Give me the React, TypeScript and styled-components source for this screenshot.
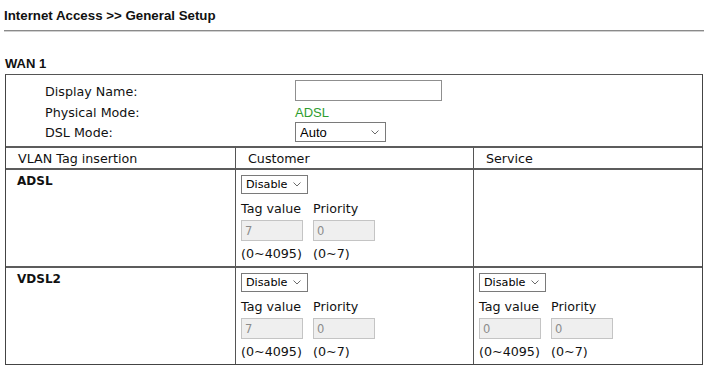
import React from "react";
import styled, { createGlobalStyle } from "styled-components";

const GlobalStyle = createGlobalStyle`
  html, body { margin: 0; padding: 0; background: #fff; }
  body { font-family: "DejaVu Sans", Verdana, sans-serif; color: #111; }
  * { box-sizing: border-box; }
`;

const Page = styled.div`
  width: 710px;
  height: 370px;
  padding: 8px 6px 0 4px;
  overflow: hidden;
`;

const Title = styled.h1`
  margin: 0;
  font: bold 13.3px/16px "Liberation Sans", Arial, sans-serif;
  color: #111;
`;

const Rule = styled.hr`
  margin: 6px 0 0;
  width: 700px;
  height: 0;
  border: 0;
  border-top: 1px solid #8a8a8a;
  border-bottom: 1px solid #d0d0d0;
`;

const Section = styled.h2`
  margin: 24px 0 0 1px;
  font: bold 13px/16px "Liberation Sans", Arial, sans-serif;
  color: #111;
`;

const Box = styled.div`
  margin: 2px 0 0 1px;
  width: 698px;
  border: 1px solid #444;
  border-top-color: #555;
  font-size: 12.7px;
`;

const General = styled.div`
  display: grid;
  grid-template-columns: 250px 1fr;
  grid-template-rows: 21px 21px 20px;
  align-items: center;
  padding: 5px 0 4px 39px;
`;

const Label = styled.div`
  line-height: 20px;
  padding-top: 2px;
`;

const Green = styled.div`
  font: 13px/20px "Liberation Sans", Arial, sans-serif;
  color: #2e9d2e;
  padding-top: 2px;
`;

const TextInput = styled.input`
  width: 147px;
  height: 21px;
  border: 1px solid #8f8f8f;
  background: #fff;
  padding: 0 3px;
  font: 12px "DejaVu Sans", sans-serif;
  outline: none;
`;

const VlanGrid = styled.div`
  display: grid;
  grid-template-columns: 229px 238px 1fr;
`;

const Cell = styled.div<{ $head?: boolean; $first?: boolean }>`
  border-top: 2px solid #5c5c5c;
  border-left: ${(p) => (p.$first ? "0" : "1px solid #555")};
  height: ${(p) => (p.$head ? "22px" : "98px")};
  padding: ${(p) => (p.$head ? "1px 0 0 12px" : "5px 0 0 5px")};
  line-height: 20px;
`;

const RowLabel = styled.div`
  font-weight: bold;
  line-height: 20px;
  margin: -4px 0 0 6px;
  font-size: 12px;
`;

const SelectBox = styled.div<{ $w: number; $h: number }>`
  display: inline-flex;
  align-items: center;
  width: ${(p) => p.$w}px;
  height: ${(p) => p.$h}px;
  border: 1px solid #7a7a7a;
  background: #fff;
  vertical-align: top;
`;

const Select = styled.select<{ $arial?: boolean }>`
  appearance: none;
  -webkit-appearance: none;
  border: 0;
  outline: none;
  background: transparent;
  flex: 1;
  min-width: 0;
  height: 100%;
  padding: 0 0 0 4px;
  margin: 0;
  color: #000;
  font: ${(p) =>
    p.$arial
      ? `13px "Liberation Sans", Arial, sans-serif`
      : `11.2px "DejaVu Sans", Verdana, sans-serif`};
`;

const Chevron = styled.svg`
  flex: none;
  margin-right: 6px;
`;

const Pair = styled.div`
  display: grid;
  grid-template-columns: 62px 62px;
  column-gap: 10px;
`;

const PairText = styled(Pair)`
  height: 22px;
  line-height: 22px;
  white-space: nowrap;
`;

const TagText = styled(PairText)`
  margin-top: 3px;
`;

const RangeText = styled(PairText)`
  margin-top: 2px;
`;

const SmallInput = styled.input`
  width: 62px;
  height: 21px;
  border: 1px solid #c4c4c4;
  background: #efefef;
  color: #8c8c8c;
  padding: 0 3px;
  font: 11.5px "DejaVu Sans", Verdana, sans-serif;
  outline: none;
`;

const Dropdown: React.FC<{ value: string; w: number; h: number; arial?: boolean }> = ({
  value,
  w,
  h,
  arial,
}) => (
  <SelectBox $w={w} $h={h}>
    <Select $arial={arial} defaultValue={value}>
      <option>{value}</option>
    </Select>
    <Chevron width="8" height="5" viewBox="0 0 8 5">
      <path d="M0.5 0.5 L4 4 L7.5 0.5" fill="none" stroke="#6a6a6a" strokeWidth="1" />
    </Chevron>
  </SelectBox>
);

const TagBlock: React.FC<{ tag: string; pri: string }> = ({ tag, pri }) => (
  <>
    <Dropdown value="Disable" w={67} h={19} />
    <TagText>
      <span>Tag value</span>
      <span>Priority</span>
    </TagText>
    <Pair>
      <SmallInput disabled defaultValue={tag} />
      <SmallInput disabled defaultValue={pri} />
    </Pair>
    <RangeText>
      <span>(0~4095)</span>
      <span>(0~7)</span>
    </RangeText>
  </>
);

export default function App() {
  return (
    <>
      <GlobalStyle />
      <Page>
        <Title>Internet Access &gt;&gt; General Setup</Title>
        <Rule />
        <Section>WAN 1</Section>
        <Box>
          <General>
            <Label>Display Name:</Label>
            <TextInput defaultValue="" />
            <Label>Physical Mode:</Label>
            <Green>ADSL</Green>
            <Label>DSL Mode:</Label>
            <div>
              <Dropdown value="Auto" w={91} h={20} arial />
            </div>
          </General>
          <VlanGrid>
            <Cell $head $first>VLAN Tag insertion</Cell>
            <Cell $head>Customer</Cell>
            <Cell $head>Service</Cell>

            <Cell $first>
              <RowLabel>ADSL</RowLabel>
            </Cell>
            <Cell>
              <TagBlock tag="7" pri="0" />
            </Cell>
            <Cell />

            <Cell $first>
              <RowLabel>VDSL2</RowLabel>
            </Cell>
            <Cell>
              <TagBlock tag="7" pri="0" />
            </Cell>
            <Cell>
              <TagBlock tag="0" pri="0" />
            </Cell>
          </VlanGrid>
        </Box>
      </Page>
    </>
  );
}
